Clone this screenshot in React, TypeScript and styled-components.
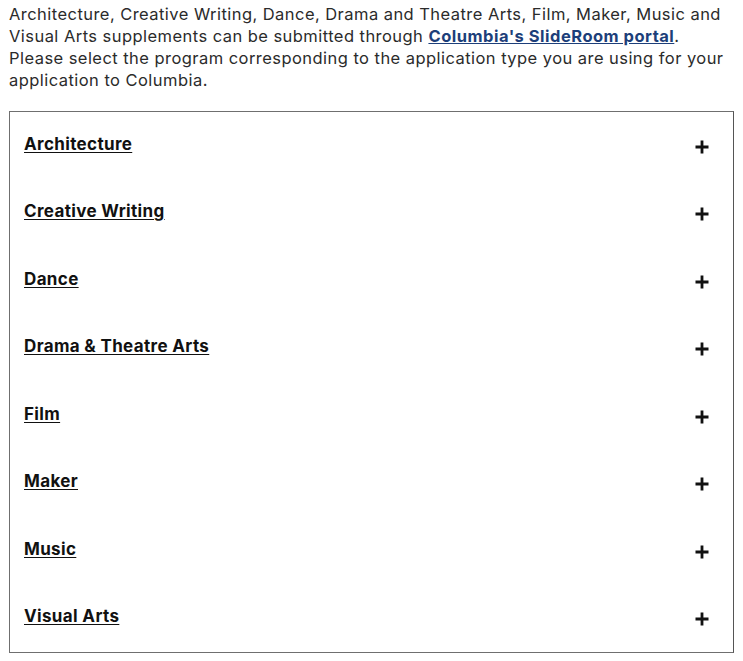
import styled, { createGlobalStyle } from 'styled-components';

const GlobalStyle = createGlobalStyle`
  html, body {
    margin: 0;
    padding: 0;
    background: #fff;
  }
  body {
    font-family: Inter, "Liberation Sans", sans-serif;
  }
`;

const programs = [
  'Architecture',
  'Creative Writing',
  'Dance',
  'Drama & Theatre Arts',
  'Film',
  'Maker',
  'Music',
  'Visual Arts',
];

export default function App() {
  return (
    <Page>
      <GlobalStyle />
      <Intro>
        Architecture, Creative Writing, Dance, Drama and Theatre Arts, Film, Maker, Music and
        Visual Arts supplements can be submitted through{' '}
        <PortalLink href="#">Columbia's SlideRoom portal</PortalLink>.
        <br />
        Please select the program corresponding to the application type you are using for your
        application to Columbia.
      </Intro>
      <Accordion>
        {programs.map((name) => (
          <Row key={name}>
            <Title href="#">{name}</Title>
            <Plus viewBox="0 0 14 14" aria-hidden="true">
              <path d="M7 0.5v13M0.5 7h13" stroke="#111" strokeWidth="2.8" fill="none" />
            </Plus>
          </Row>
        ))}
      </Accordion>
    </Page>
  );
}

const Page = styled.div`
  padding: 3px 9px 0 9px;
  width: 725px;
`;

const Intro = styled.p`
  margin: 0;
  font-size: 16.5px;
  line-height: 22px;
  letter-spacing: 0.45px;
  color: #2b2b2b;
`;

const PortalLink = styled.a`
  color: #1d3f7a;
  font-weight: 700;
  text-decoration: underline;
  letter-spacing: 0.5px;
`;

const Accordion = styled.div`
  margin-top: 20px;
  border: 1px solid #6f6f6f;
  border-right-color: #555;
`;

const Row = styled.div`
  height: 67.5px;
  display: flex;
  align-items: center;
  justify-content: space-between;
  padding: 0 24px 0 14px;
`;

const Title = styled.a`
  margin-top: -4px;
  font-size: 17px;
  font-weight: 700;
  letter-spacing: 0.35px;
  color: #111;
  text-decoration: underline;
  text-underline-offset: 2px;
`;

const Plus = styled.svg`
  margin-top: 2px;
  width: 14px;
  height: 14px;
`;
